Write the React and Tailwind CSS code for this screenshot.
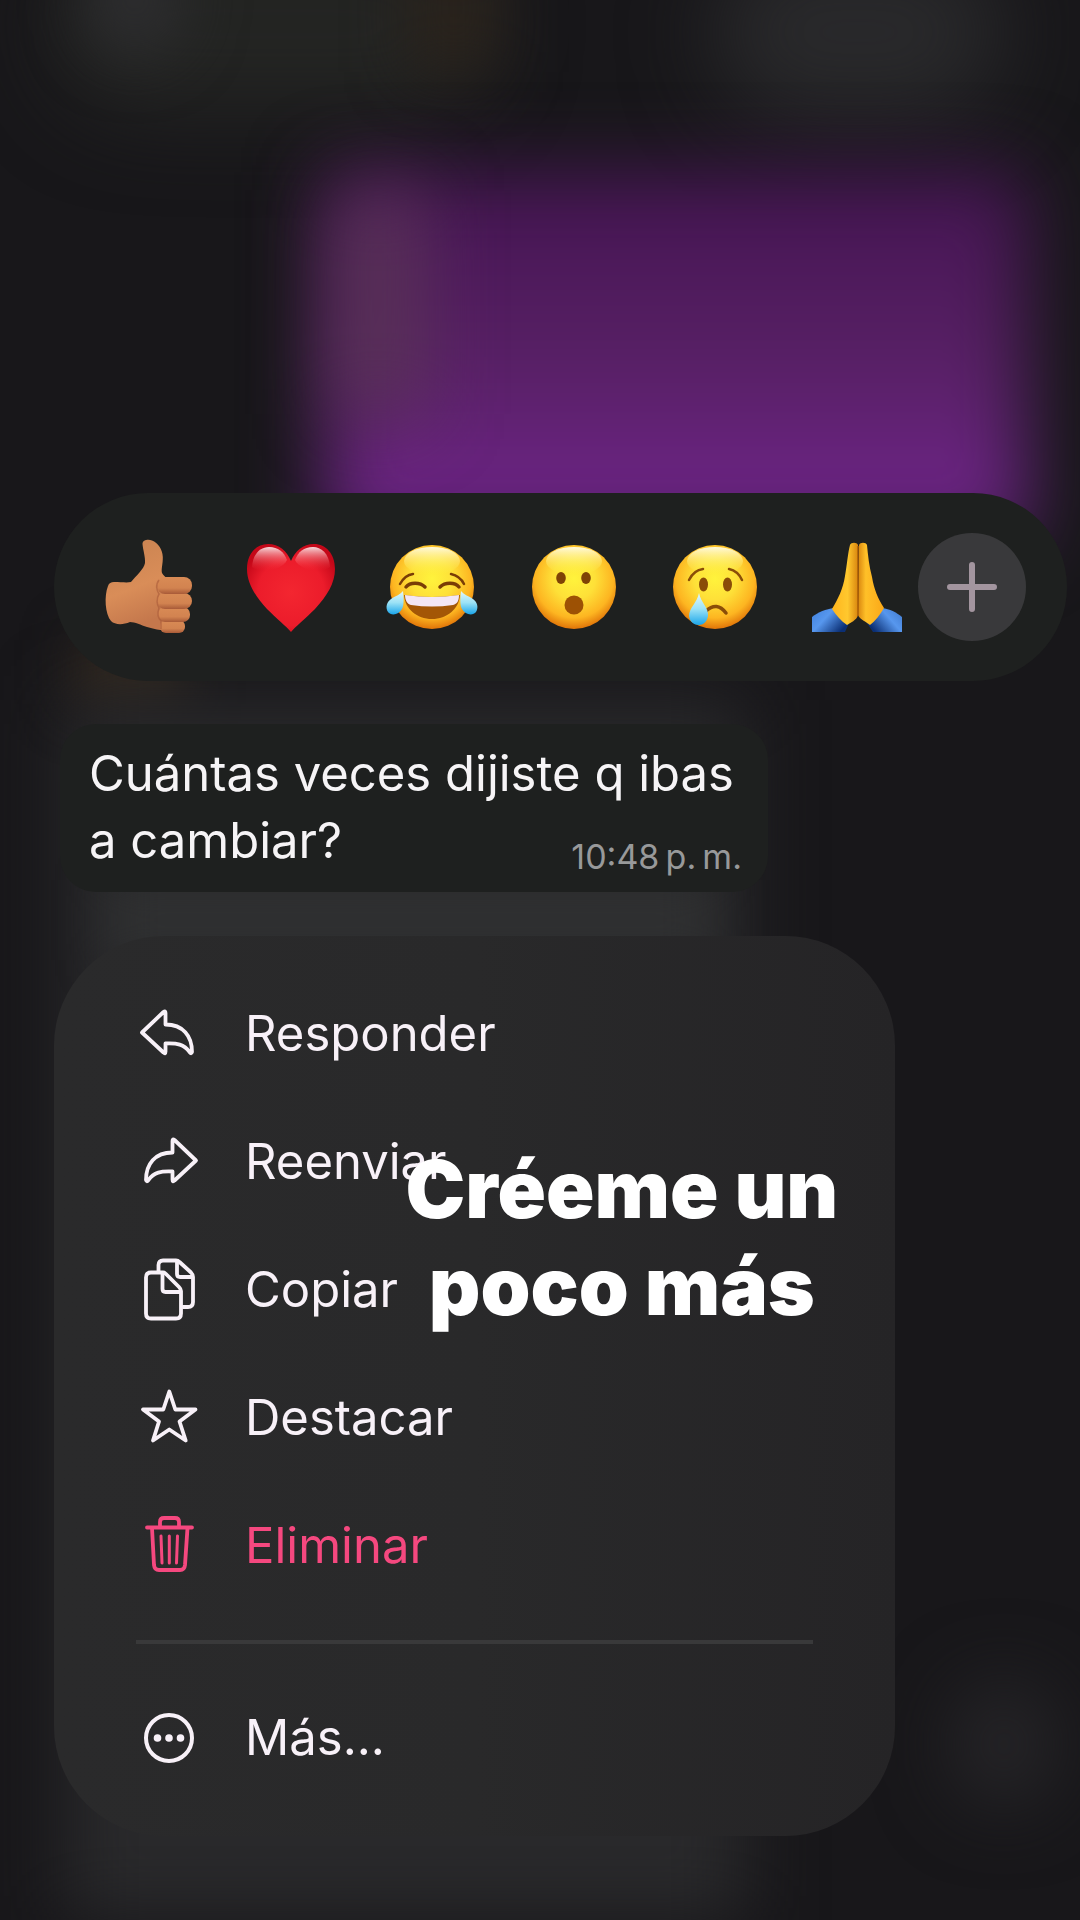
const FaceGradient = ({ id }) => (
  <defs>
    <radialGradient id={id} cx="50%" cy="40%" r="60%">
      <stop offset="0%" stopColor="#fff33c" />
      <stop offset="42%" stopColor="#fee038" />
      <stop offset="78%" stopColor="#fdb521" />
      <stop offset="100%" stopColor="#e07408" />
    </radialGradient>
    <linearGradient id={`${id}-shine`} x1="0" y1="0" x2="0" y2="1">
      <stop offset="0%" stopColor="#fffde8" stopOpacity="0.95" />
      <stop offset="100%" stopColor="#fff33c" stopOpacity="0" />
    </linearGradient>
    <linearGradient id={`${id}-tear`} x1="0" y1="0" x2="0" y2="1">
      <stop offset="0%" stopColor="#e4f8fb" />
      <stop offset="50%" stopColor="#9be2f6" />
      <stop offset="100%" stopColor="#1ba6ea" />
    </linearGradient>
  </defs>
);

const Face = ({ id }) => (
  <>
    <FaceGradient id={id} />
    <circle cx="48" cy="48" r="42" fill={`url(#${id})`} />
    <ellipse cx="48" cy="22" rx="28" ry="14" fill={`url(#${id}-shine)`} />
  </>
);

const ThumbsUp = () => (
  <svg viewBox="0 0 96 96" className="size-24" aria-hidden="true">
    <defs>
      <linearGradient id="skin" x1="0" y1="0" x2="0.3" y2="1">
        <stop offset="0%" stopColor="#c88250" />
        <stop offset="60%" stopColor="#d98d58" />
        <stop offset="100%" stopColor="#c4774c" />
      </linearGradient>
      <linearGradient id="finger" x1="0" y1="0" x2="0" y2="1">
        <stop offset="0%" stopColor="#d98b55" />
        <stop offset="65%" stopColor="#d28350" />
        <stop offset="100%" stopColor="#a85a38" />
      </linearGradient>
    </defs>
    <path
      d="M13 43C20 43 26 44 30 43C35 37 43 30 44 24C44.500 18 42 11 41.500 5C41.500 1 47 0 51 1.500C57 4 61.500 10 61.800 18C62 25 60 30 61 34C64 39 68 40 70 42L72 91C64 93 54 90 46 88C40 86 34 83 29 83C22 86 14 86 10 82C4 75 3 57 7 47C8 44 10 43 13 43Z"
      fill="url(#skin)"
    />
    <rect x="59" y="81" width="25" height="13" rx="6" fill="url(#finger)" />
    <rect x="57" y="68" width="32" height="15" rx="7" fill="url(#finger)" />
    <rect x="56" y="54" width="35" height="16" rx="8" fill="url(#finger)" />
    <rect x="56" y="38" width="35" height="17" rx="8" fill="url(#finger)" />
    <path d="M58 41C54 46 56 52 58 55C55 60 56 66 58 69C56 75 57 79 60 82L60 90" fill="none" stroke="#a85a38" strokeWidth="1.500" opacity="0.600" />
  </svg>
);

const Heart = () => (
  <svg viewBox="0 0 96 96" className="size-24" aria-hidden="true">
    <defs>
      <radialGradient id="heart" cx="50%" cy="55%" r="58%">
        <stop offset="0%" stopColor="#f32630" />
        <stop offset="65%" stopColor="#ec1c2b" />
        <stop offset="100%" stopColor="#c40718" />
      </radialGradient>
      <linearGradient id="heart-shine" x1="0" y1="0" x2="0" y2="1">
        <stop offset="0%" stopColor="#fff" stopOpacity="0.850" />
        <stop offset="100%" stopColor="#f32630" stopOpacity="0" />
      </linearGradient>
    </defs>
    <path
      d="M48 93C44 88 33 79 24 70C12 57 4 44 4 30C4 15 13 5 25 5C36 5 44 12 48 22C52 12 60 5 71 5C83 5 92 15 92 30C92 44 84 57 72 70C63 79 52 88 48 93Z"
      fill="url(#heart)"
    />
    <path d="M9 28C10 14 18 8 26 8C35 8 41 13 44 21C40 30 20 36 9 28Z" fill="url(#heart-shine)" />
    <path d="M87 28C86 14 78 8 70 8C61 8 55 13 52 21C56 30 76 36 87 28Z" fill="url(#heart-shine)" />
  </svg>
);

const Joy = () => (
  <svg viewBox="0 0 96 96" className="size-24" aria-hidden="true">
    <Face id="joy" />
    <g fill="none" stroke="#7a3d06" strokeLinecap="round">
      <path d="M16 45Q21 36 29 35M67 35Q76 37 80 45" strokeWidth="2.500" />
      <path d="M22 48C26 43 36 43 41 48M56 48C61 43 71 43 75 48" strokeWidth="3.500" />
    </g>
    <path d="M20 56Q48 60 76 56C75 70 63 80 48 80C33 80 21 70 20 56Z" fill="#a35606" />
    <path d="M21 56Q48 60 75 56C75 62 73 65 69 66Q48 69 27 66C23 65 21 61 21 56Z" fill="#f3e6f4" />
    <path d="M19 52C20 60 20 66 18 70C15 76 7 77 4 73C1 68 3 63 7 60C11 57 16 56 19 52Z" fill="url(#joy-tear)" />
    <path d="M77 52C76 60 76 66 78 70C81 76 89 77 92 73C95 68 93 63 89 60C85 57 80 56 77 52Z" fill="url(#joy-tear)" />
  </svg>
);

const Surprised = () => (
  <svg viewBox="0 0 96 96" className="size-24" aria-hidden="true">
    <Face id="wow" />
    <ellipse cx="35" cy="39" rx="4.800" ry="6" fill="#7f4305" />
    <ellipse cx="60" cy="39" rx="4.800" ry="6" fill="#7f4305" />
    <circle cx="48" cy="66" r="9.500" fill="#9d5104" />
  </svg>
);

const Crying = () => (
  <svg viewBox="0 0 96 96" className="size-24" aria-hidden="true">
    <Face id="cry" />
    <g fill="none" stroke="#8a4d08" strokeLinecap="round">
      <path d="M22 41Q27 31 36 30M62 30Q71 32 75 41" strokeWidth="2.500" />
      <path d="M39 72Q50 62 59 74" strokeWidth="3.500" />
    </g>
    <ellipse cx="36.500" cy="45.500" rx="4.500" ry="7" fill="#8a4d08" />
    <ellipse cx="60.500" cy="45.500" rx="4.500" ry="7" fill="#8a4d08" />
    <path d="M32 54C34 64 42 69 41 77C40 83 36 86 32 86C27 86 23 83 22 77C22 69 30 64 32 54Z" fill="url(#cry-tear)" />
  </svg>
);

const Praying = () => (
  <svg viewBox="0 0 96 96" className="size-24" aria-hidden="true">
    <defs>
      <linearGradient id="hand-l" x1="0" y1="0" x2="1" y2="0">
        <stop offset="0%" stopColor="#ffb41c" />
        <stop offset="60%" stopColor="#ffc82e" />
        <stop offset="100%" stopColor="#d9860f" />
      </linearGradient>
      <linearGradient id="hand-r" x1="0" y1="0" x2="1" y2="0">
        <stop offset="0%" stopColor="#d9860f" />
        <stop offset="30%" stopColor="#ffc028" />
        <stop offset="100%" stopColor="#fba818" />
      </linearGradient>
      <linearGradient id="sleeve-l" x1="0" y1="0" x2="1" y2="0.6">
        <stop offset="0%" stopColor="#3f7fdc" />
        <stop offset="45%" stopColor="#5797ee" />
        <stop offset="100%" stopColor="#0b2f74" />
      </linearGradient>
      <linearGradient id="sleeve-r" x1="1" y1="0" x2="0" y2="0.6">
        <stop offset="0%" stopColor="#3f78cc" />
        <stop offset="45%" stopColor="#5797ee" />
        <stop offset="100%" stopColor="#0b2f74" />
      </linearGradient>
    </defs>
    <path d="M3 78C9 73 17 70 25 69L40 84L36 93H3Z" fill="url(#sleeve-l)" />
    <path d="M93 78C87 73 81 70 73 69L58 84L64 93H93Z" fill="url(#sleeve-r)" />
    <path d="M41 6C42 3 48 3 49 6V76C48 81 41 84 38 86C32 82 27 76 23 70C29 60 34 50 36 37C38 26 39 13 41 6Z" fill="url(#hand-l)" />
    <path d="M50 6C51 3 57 3 58 6C59 16 60 27 63 38C65 50 69 60 75 69C71 76 66 82 61 86C58 83 51 81 49 76Z" fill="url(#hand-r)" />
    <path d="M49 7V77" stroke="#a85c06" strokeWidth="1.500" />
  </svg>
);

const Icon = ({ children }) => (
  <svg
    viewBox="0 0 64 64"
    className="size-16 shrink-0"
    fill="none"
    stroke="currentColor"
    strokeWidth="3.800"
    strokeLinecap="round"
    strokeLinejoin="round"
    aria-hidden="true"
  >
    {children}
  </svg>
);

const replyPath = 'M5 30.500L26.500 10Q28.500 8.500 28.500 11V22.500C46 22.500 55 34 55 50Q54.500 52.500 52.500 50C47 42 40 41 28.500 41.500V49.500Q28.500 52.500 26.500 50.500Z';

const actions = [
  { label: 'Responder', icon: <path d={replyPath} /> },
  { label: 'Reenviar', icon: <path d={replyPath} transform="matrix(-1 0 0 1 64 0)" /> },
  {
    label: 'Copiar',
    icon: (
      <>
        <path d="M26 14.500H14Q9 14.500 9 19.500V55.500Q9 60.500 14 60.500H39Q44 60.500 44 55.500V33Q44 31 42 29L29 16Q27.500 14.500 26 14.500Z" />
        <path d="M25.500 15V31Q25.500 34 28.500 34H43" />
        <path d="M21.500 13V7Q21.500 2.500 26 2.500H39Q41 2.500 42.500 4L54 14.500Q56 16.500 56 19V44Q56 49 51 49H46" />
        <path d="M40 3V16Q40 19 43 19H55" />
      </>
    ),
  },
  {
    label: 'Destacar',
    icon: <path d="M32.300 5.500L38.300 23.500H58.500L42.500 35.500L48.700 54.500L32.300 43.500L16 54.500L22 35.500L6 23.500H26.300Z" />,
  },
  {
    label: 'Eliminar',
    danger: true,
    icon: (
      <>
        <path d="M10 13.500H55M23 13V8Q23 4 27 4H38Q42 4 42 8V13" />
        <path d="M15 14L17 51Q17.500 56 22 56H43Q47.500 56 48 51L50.500 14" />
        <path d="M24 22L25 49M32.300 22V49M40.500 22L39.500 49" strokeWidth="3" />
      </>
    ),
  },
];

const reactions = [
  { label: 'Me gusta', art: <ThumbsUp /> },
  { label: 'Me encanta', art: <Heart /> },
  { label: 'Me divierte', art: <Joy /> },
  { label: 'Me asombra', art: <Surprised /> },
  { label: 'Me entristece', art: <Crying /> },
  { label: 'Gracias', art: <Praying /> },
];

const MenuItem = ({ label, icon, danger }) => (
  <button
    type="button"
    className={`flex h-32 w-full items-center gap-11 pl-[83px] text-left text-[49px] ${danger ? 'text-[#f5487f]' : 'text-[#f8f1f8]'}`}
  >
    <Icon>{icon}</Icon>
    <span>{label}</span>
  </button>
);

/* Blurred chat behind the menu */
const Backdrop = () => (
  <div className="absolute inset-0 -z-10 overflow-hidden bg-[#18171a]" aria-hidden="true">
    <div className="absolute -top-16 left-[5%] h-44 w-[40%] rounded-full bg-[#242523] blur-[44px]" />
    <div className="absolute -top-14 left-[8%] h-28 w-[9%] rounded-full bg-[#2d2d2f] blur-[30px]" />
    <div className="absolute -top-14 left-[38%] h-32 w-[8%] bg-[#2a231c] blur-[30px]" />
    <div className="absolute -top-14 left-[66%] h-44 w-[27%] rounded-full bg-[#29292b] blur-[44px]" />
    <div className="absolute top-[172px] right-[5%] left-[30%] h-[370px] bg-linear-to-b from-[#441452] via-[#572064] via-50% to-[#742590] blur-[38px]" />
    <div className="absolute top-[190px] left-[31%] h-56 w-[8%] bg-[#593257] blur-[38px]" />
    <div className="absolute top-[640px] left-[7%] h-16 w-[10%] bg-[#33291f] blur-[26px]" />
    <div className="absolute top-[700px] bottom-0 left-[6%] w-[63%] bg-[#29292b] blur-[36px]" />
    <div className="absolute top-[880px] left-[10%] h-20 w-[56%] bg-[#2f3031] blur-[24px]" />
    <div className="absolute bottom-28 left-[88%] h-32 w-[10%] rounded-full bg-[#252427] blur-[36px]" />
  </div>
);

const App = () => {
  return (
    <main className="relative isolate flex min-h-screen flex-col items-start overflow-hidden pt-[493px] pb-[83px] pl-[54px] font-['Inter','Liberation_Sans',sans-serif]">
      <Backdrop />

      {/* Reactions */}
      <div className="flex h-[188px] w-full items-center pr-[13px]">
        <div className="flex h-full w-full items-center gap-[13px] rounded-full bg-[#1e201f] pr-[41px] pl-[47px]">
          <div className="flex flex-1 items-center justify-between">
            {reactions.map(({ label, art }) => (
              <button key={label} type="button" aria-label={label}>
                {art}
              </button>
            ))}
          </div>
          <button
            type="button"
            aria-label="Más reacciones"
            className="flex size-[108px] shrink-0 items-center justify-center rounded-full bg-[#39393b] text-[#a3959f]"
          >
            <svg viewBox="0 0 50 50" className="size-[50px]" fill="none" stroke="currentColor" strokeWidth="6" strokeLinecap="round" aria-hidden="true">
              <path d="M25 3V47M3 25H47" />
            </svg>
          </button>
        </div>
      </div>

      {/* Message */}
      <article className="mt-[43px] ml-[6px] flex h-[168px] w-[69%] items-end justify-between rounded-[36px] bg-[#1e201f] pr-[26px] pb-[10px] pl-[29px] text-[#f6f4f6]">
        <p className="pb-2 text-[49px] leading-[67px] whitespace-nowrap">
          Cuántas veces dijiste q ibas
          <br />a cambiar?
        </p>
        <time className="-ml-52 text-[34px] whitespace-nowrap text-[#98999a]">10:48&#8201;p.&#8201;m.</time>
      </article>

      {/* Context menu */}
      <nav className="relative mt-[44px] w-[82%] rounded-[110px] bg-linear-to-r from-[#2a2a2b] via-[#29292a] to-[#252426] py-[34px]">
        {actions.map((action) => (
          <MenuItem key={action.label} {...action} />
        ))}
        <hr className="mx-[82px] my-[30px] border-t-4 border-[#39393a]" />
        <MenuItem
          label="Más..."
          icon={
            <>
              <circle cx="32" cy="32" r="23" strokeWidth="4" />
              <g fill="currentColor" stroke="none">
                <circle cx="20.500" cy="32" r="3.800" />
                <circle cx="32" cy="32" r="3.800" />
                <circle cx="43.500" cy="32" r="3.800" />
              </g>
            </>
          }
        />

        <p className="absolute top-[204px] right-[57px] text-center text-[80px] leading-[97px] font-black whitespace-nowrap text-white">
          Créeme un
          <br />
          poco más
        </p>
      </nav>
    </main>
  );
};

export default App;
